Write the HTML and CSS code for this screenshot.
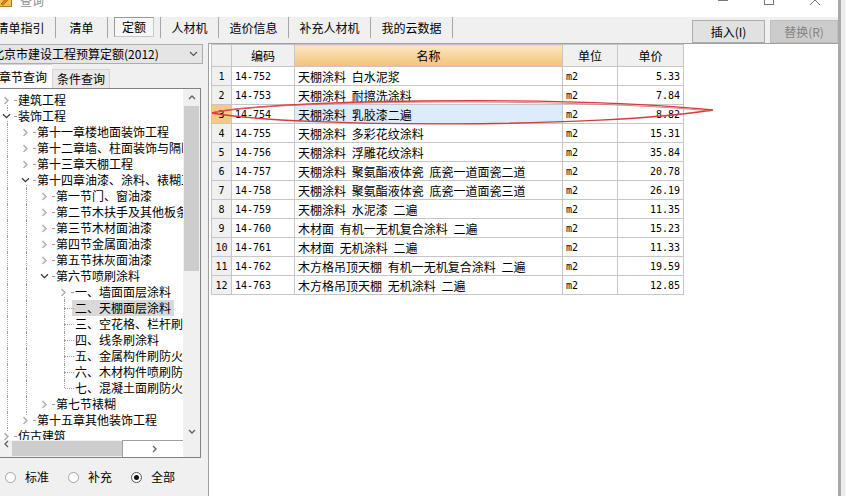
FILE: index.html
```html
<!DOCTYPE html>
<html lang="zh-CN">
<head>
<meta charset="utf-8">
<title>查询</title>
<link rel="stylesheet" href="styles.css">
</head>
<body>
<svg class="defs" width="0" height="0" aria-hidden="true">
  <symbol id="chev-r" viewBox="0 0 6 9"><polyline points="1.5,1 5,4.5 1.5,8" fill="none" stroke="#a8a8a8" stroke-width="1.3"/></symbol>
  <symbol id="chev-d" viewBox="0 0 9 6"><polyline points="1,1.2 4.5,4.7 8,1.2" fill="none" stroke="#3a3a3a" stroke-width="1.3"/></symbol>
</svg>
<div class="screen">
  <div class="window">
    <header class="titlebar">
      <svg class="app-icon" viewBox="0 0 14 14"><rect x="0.5" y="0.5" width="13" height="13" fill="#f3c24d" stroke="#b7791f"/><path d="M3 11 L10 3 L12 5 L5 12 Z" fill="#d9822b" stroke="#8a4b12" stroke-width="0.6"/></svg>
      <span class="title">查询</span>
      <div class="caption">
        <span class="cap"><svg viewBox="0 0 10 10" width="10" height="10"><line x1="0" y1="5.5" x2="10" y2="5.5" stroke="#777" stroke-width="1"/></svg></span>
        <span class="cap"><svg viewBox="0 0 10 10" width="10" height="10"><rect x="0.5" y="0.5" width="9" height="9" fill="none" stroke="#777" stroke-width="1"/></svg></span>
        <span class="cap"><svg viewBox="0 0 10 10" width="10" height="10"><path d="M0 0 L10 10 M10 0 L0 10" stroke="#777" stroke-width="1"/></svg></span>
      </div>
    </header>

    <div class="toolbar">
      <nav class="tabs">
        <span class="tab first">清单指引</span>
        <span class="tab narrow">清单</span>
        <span class="tab pressed"><span class="press-box">定额</span></span>
        <span class="tab">人材机</span>
        <span class="tab">造价信息</span>
        <span class="tab">补充人材机</span>
        <span class="tab">我的云数据</span>
      </nav>
      <div class="actions">
        <span class="btn">插入(I)</span>
        <span class="btn disabled">替换(R)</span>
      </div>
    </div>

    <div class="main">
      <aside class="left">
        <div class="combo">
          <span class="combo-text">北京市建设工程预算定额(2012)</span>
          <svg class="combo-arrow" viewBox="0 0 9 6" width="9" height="6"><polyline points="1,1 4.5,4.5 8,1" fill="none" stroke="#555" stroke-width="1.2"/></svg>
        </div>
        <div class="ptabs">
          <span class="ptab active">章节查询</span>
          <span class="ptab">条件查询</span>
        </div>
        <div class="treebox">
          <div class="tree">
            <div class="row"><span class="n c dn"><svg><use href="#chev-r"/></svg><b class="dot"></b></span><span class="t">建筑工程</span></div>
            <div class="row"><span class="n e up dn"><svg><use href="#chev-d"/></svg><b class="dot"></b></span><span class="t">装饰工程</span></div>
            <div class="row"><i class="g v"></i><span class="n c"><svg><use href="#chev-r"/></svg><b class="dot"></b></span><span class="t">第十一章楼地面装饰工程</span></div>
            <div class="row"><i class="g v"></i><span class="n c"><svg><use href="#chev-r"/></svg><b class="dot"></b></span><span class="t">第十二章墙、柱面装饰与隔断、幕墙工程</span></div>
            <div class="row"><i class="g v"></i><span class="n c"><svg><use href="#chev-r"/></svg><b class="dot"></b></span><span class="t">第十三章天棚工程</span></div>
            <div class="row"><i class="g v"></i><span class="n e dn"><svg><use href="#chev-d"/></svg><b class="dot"></b></span><span class="t">第十四章油漆、涂料、裱糊工程</span></div>
            <div class="row"><i class="g v"></i><i class="g v"></i><span class="n c"><svg><use href="#chev-r"/></svg><b class="dot"></b></span><span class="t">第一节门、窗油漆</span></div>
            <div class="row"><i class="g v"></i><i class="g v"></i><span class="n c"><svg><use href="#chev-r"/></svg><b class="dot"></b></span><span class="t">第二节木扶手及其他板条、线条油漆</span></div>
            <div class="row"><i class="g v"></i><i class="g v"></i><span class="n c"><svg><use href="#chev-r"/></svg><b class="dot"></b></span><span class="t">第三节木材面油漆</span></div>
            <div class="row"><i class="g v"></i><i class="g v"></i><span class="n c"><svg><use href="#chev-r"/></svg><b class="dot"></b></span><span class="t">第四节金属面油漆</span></div>
            <div class="row"><i class="g v"></i><i class="g v"></i><span class="n c"><svg><use href="#chev-r"/></svg><b class="dot"></b></span><span class="t">第五节抹灰面油漆</span></div>
            <div class="row"><i class="g v"></i><i class="g v"></i><span class="n e"><svg><use href="#chev-d"/></svg><b class="dot"></b></span><span class="t">第六节喷刷涂料</span></div>
            <div class="row"><i class="g v"></i><i class="g v"></i><i class="g"></i><span class="n c dn"><svg><use href="#chev-r"/></svg><b class="dot"></b></span><span class="t">一、墙面面层涂料</span></div>
            <div class="row"><i class="g v"></i><i class="g v"></i><i class="g"></i><span class="n leaf up dn"><b class="dash"></b></span><span class="t sel">二、天棚面层涂料</span></div>
            <div class="row"><i class="g v"></i><i class="g v"></i><i class="g"></i><span class="n leaf up dn"><b class="dash"></b></span><span class="t">三、空花格、栏杆刷涂料</span></div>
            <div class="row"><i class="g v"></i><i class="g v"></i><i class="g"></i><span class="n leaf up dn"><b class="dash"></b></span><span class="t">四、线条刷涂料</span></div>
            <div class="row"><i class="g v"></i><i class="g v"></i><i class="g"></i><span class="n leaf up dn"><b class="dash"></b></span><span class="t">五、金属构件刷防火涂料</span></div>
            <div class="row"><i class="g v"></i><i class="g v"></i><i class="g"></i><span class="n leaf up dn"><b class="dash"></b></span><span class="t">六、木材构件喷刷防火涂料</span></div>
            <div class="row"><i class="g v"></i><i class="g v"></i><i class="g"></i><span class="n leaf up"><b class="dash"></b></span><span class="t">七、混凝土面刷防火涂料</span></div>
            <div class="row"><i class="g v"></i><i class="g v"></i><span class="n c"><svg><use href="#chev-r"/></svg><b class="dot"></b></span><span class="t">第七节裱糊</span></div>
            <div class="row"><i class="g v"></i><span class="n c up"><svg><use href="#chev-r"/></svg><b class="dot"></b></span><span class="t">第十五章其他装饰工程</span></div>
            <div class="row"><span class="n c up"><svg><use href="#chev-r"/></svg><b class="dot"></b></span><span class="t">仿古建筑</span></div>
          </div>
          <div class="vscroll">
            <span class="arrow"><svg viewBox="0 0 8 5" width="8" height="5"><polyline points="1,4 4,1 7,4" fill="none" stroke="#606060" stroke-width="1.3"/></svg></span>
            <span class="track"><span class="vthumb"></span></span>
            <span class="arrow"><svg viewBox="0 0 8 5" width="8" height="5"><polyline points="1,1 4,4 7,1" fill="none" stroke="#606060" stroke-width="1.3"/></svg></span>
          </div>
          <div class="hscroll">
            <span class="harrow left"><svg viewBox="0 0 5 8" width="5" height="8"><polyline points="4,1 1,4 4,7" fill="none" stroke="#606060" stroke-width="1.3"/></svg></span>
            <span class="hthumb"></span>
            <span class="harrow right"><svg viewBox="0 0 5 8" width="5" height="8"><polyline points="1,1 4,4 1,7" fill="none" stroke="#606060" stroke-width="1.3"/></svg></span>
          </div>
          <div class="corner"></div>
        </div>
        <div class="radios">
          <span class="radio"><span class="circle"></span>标准</span>
          <span class="radio"><span class="circle"></span>补充</span>
          <span class="radio"><span class="circle on"></span>全部</span>
        </div>
      </aside>
      <div class="splitter"></div>
      <main class="right">
        <table class="grid">
          <colgroup><col class="c-rn"><col class="c-code"><col class="c-name"><col class="c-unit"><col class="c-price"></colgroup>
          <thead>
            <tr><th class="rn"></th><th>编码</th><th class="sorted">名称</th><th>单位</th><th>单价</th></tr>
          </thead>
          <tbody>
            <tr><td class="rn">1</td><td class="code">14-752</td><td>天棚涂料 白水泥浆</td><td class="code">m2</td><td class="num">5.33</td></tr>
            <tr><td class="rn">2</td><td class="code">14-753</td><td>天棚涂料 耐擦洗涂料</td><td class="code">m2</td><td class="num">7.84</td></tr>
            <tr class="current"><td class="rn">3</td><td class="code">14-754</td><td class="focus">天棚涂料 乳胶漆二遍</td><td class="code">m2</td><td class="num">8.82</td></tr>
            <tr><td class="rn">4</td><td class="code">14-755</td><td>天棚涂料 多彩花纹涂料</td><td class="code">m2</td><td class="num">15.31</td></tr>
            <tr><td class="rn">5</td><td class="code">14-756</td><td>天棚涂料 浮雕花纹涂料</td><td class="code">m2</td><td class="num">35.84</td></tr>
            <tr><td class="rn">6</td><td class="code">14-757</td><td>天棚涂料 聚氨酯液体瓷 底瓷一道面瓷二道</td><td class="code">m2</td><td class="num">20.78</td></tr>
            <tr><td class="rn">7</td><td class="code">14-758</td><td>天棚涂料 聚氨酯液体瓷 底瓷一道面瓷三道</td><td class="code">m2</td><td class="num">26.19</td></tr>
            <tr><td class="rn">8</td><td class="code">14-759</td><td>天棚涂料 水泥漆 二遍</td><td class="code">m2</td><td class="num">11.35</td></tr>
            <tr><td class="rn">9</td><td class="code">14-760</td><td>木材面 有机一无机复合涂料 二遍</td><td class="code">m2</td><td class="num">15.23</td></tr>
            <tr><td class="rn">10</td><td class="code">14-761</td><td>木材面 无机涂料 二遍</td><td class="code">m2</td><td class="num">11.33</td></tr>
            <tr><td class="rn">11</td><td class="code">14-762</td><td>木方格吊顶天棚 有机一无机复合涂料 二遍</td><td class="code">m2</td><td class="num">19.59</td></tr>
            <tr><td class="rn">12</td><td class="code">14-763</td><td>木方格吊顶天棚 无机涂料 二遍</td><td class="code">m2</td><td class="num">12.85</td></tr>
          </tbody>
        </table>
        <svg class="mark" viewBox="209 44 629 452" width="629" height="452" aria-hidden="true">
          <path d="M212,113 C262,100 560,95 713,110 C600,128 300,128 212,113" fill="none" stroke="#d8393c" stroke-width="1.4"/>
          <path d="M214,112 C270,101 565,97 711,111" fill="none" stroke="#e0676a" stroke-width="0.8"/>
        </svg>
      </main>
    </div>
  </div>
  <div class="backdrop"></div>
</div>
</body>
</html>
```
FILE: styles.css
```css
* { box-sizing: border-box; margin: 0; padding: 0; }
html, body { width: 846px; height: 496px; overflow: hidden; }
body {
  font: 12px/16px "Noto Sans CJK SC", "Liberation Sans", sans-serif;
  color: #000;
  background: #f0f0f0;
}
.defs { position: absolute; width: 0; height: 0; }

.screen { display: flex; height: 496px; }
.window { width: 838px; display: flex; flex-direction: column; background: #f0f0f0; }
.backdrop { flex: 1; border-left: 3px solid #a9a9a9; background: #ededed; }

/* title bar */
.titlebar { height: 17px; background: #fff; display: flex; align-items: flex-start; overflow: hidden; }
.app-icon { width: 14px; height: 14px; margin: -7px 0 0 -2px; flex: none; }
.title { margin: -7px 0 0 8px; color: #8f8f8f; }
.caption { margin-left: auto; display: flex; margin-top: -10px; }
.cap { width: 46px; height: 20px; display: flex; align-items: center; justify-content: center; }

/* toolbar */
.toolbar { height: 26px; display: flex; align-items: flex-start; }
.tabs { display: flex; height: 21px; }
.tab {
  height: 21px; padding: 0 10.5px; display: flex; align-items: center; justify-content: center;
  border-right: 1px solid #a5a5a5; white-space: nowrap;
}
.tab.first { margin-left: -14px; width: 70px; }
.tab.narrow { width: 52px; }
.tab.pressed { padding: 0 6px; width: 53px; align-items: flex-start; }
.press-box {
  width: 40px; height: 20px; display: flex; align-items: center; justify-content: center;
  border: 1px solid; border-color: #9a9a9a #c8c8c8 #c8c8c8 #9a9a9a; background: #f7f7f7;
}
.actions { margin-left: auto; margin-top: 3px; display: flex; gap: 5px; }
.btn {
  height: 23px; width: 73px; display: flex; align-items: center; justify-content: center;
  background: #e1e1e1; border: 1px solid #adadad;
}
.btn.disabled { width: 68px; background: #cccccc; border-color: #bfbfbf; color: #838383; }

/* main area */
.main { flex: 1; display: flex; min-height: 0; }
.left { width: 203px; display: flex; flex-direction: column; flex: none; }
.splitter { width: 5px; flex: none; background: #f0f0f0; }

.combo {
  margin: 1px 0 0 -12px; width: 215px; height: 20px; flex: none;
  display: flex; align-items: center; padding-left: 3px;
  background: #e5e5e5; border: 1px solid #adadad; white-space: nowrap;
}
.combo-arrow { margin: 0 4px 0 auto; flex: none; }

.ptabs { height: 24px; display: flex; align-items: flex-end; flex: none; }
.ptab {
  height: 19px; padding: 0 4px; display: flex; align-items: center;
  background: #e9e9e9; border: 1px solid #d5d5d5; border-bottom: none; white-space: nowrap;
}
.ptab.active { height: 24px; margin-left: -7px; padding-left: 5px; width: 59px; background: #fbfbfb; border-right: none; }

.treebox {
  margin-left: -1px; width: 202px; height: 370px; flex: none;
  border: 1px solid #828282; background: #fff;
  display: grid; grid-template-columns: 183px 17px; grid-template-rows: 351px 17px;
}
.tree { overflow: hidden; padding-top: 3px; white-space: nowrap; }
.row { display: flex; height: 16px; align-items: center; }
.g { width: 19px; height: 16px; position: relative; flex: none; }
.g.v::before {
  content: ""; position: absolute; left: 7px; top: 0; bottom: 0; border-left: 1px dotted #9c9c9c;
}
.n { width: 18px; height: 16px; position: relative; flex: none; display: flex; align-items: center; }
.n.c svg { width: 6px; height: 9px; margin-left: 3px; }
.n.e svg { width: 9px; height: 6px; margin-left: 2px; }
.n.up::before {
  content: ""; position: absolute; left: 7px; top: 0; height: 3px; border-left: 1px dotted #9c9c9c;
}
.n.dn::after {
  content: ""; position: absolute; left: 7px; top: 13px; bottom: 0; border-left: 1px dotted #9c9c9c;
}
.n.leaf.up::before { height: 8px; }
.n.leaf.dn::after { top: 8px; }
.dot { position: absolute; left: 14px; top: 8px; width: 2px; border-top: 1px dotted #9c9c9c; }
.dash { position: absolute; left: 8px; top: 8px; width: 9px; border-top: 1px dotted #9c9c9c; }
.t { line-height: 16px; }
.t.sel { background: #d9d9d9; margin-left: -3px; padding: 0 3px; }

.vscroll { display: flex; flex-direction: column; background: #f0f0f0; }
.arrow { height: 17px; display: flex; align-items: center; justify-content: center; flex: none; }
.track { flex: 1; display: flex; flex-direction: column; padding: 0 1px; }
.vthumb { height: 165px; background: #cdcdcd; }
.hscroll { display: flex; align-items: center; background: #f0f0f0; }
.harrow { height: 17px; display: flex; align-items: center; flex: none; }
.harrow.left { width: 12px; padding-left: 1px; }
.harrow.right { width: 17px; margin-left: auto; justify-content: center; }
.hthumb { width: 110px; height: 15px; background: #cdcdcd; }
.corner { background: #f0f0f0; }

.radios { flex: 1; display: flex; align-items: center; padding-left: 5px; gap: 19px; }
.radio { display: flex; align-items: center; gap: 9px; }
.circle {
  width: 11px; height: 11px; border-radius: 50%; border: 1px solid #a3a3a3; background: #fff;
  display: flex; align-items: center; justify-content: center;
}
.circle.on { border-color: #555; }
.circle.on::after { content: ""; width: 5px; height: 5px; border-radius: 50%; background: #111; }

/* right grid */
.right {
  flex: 1; position: relative; background: #fff;
  border-left: 1px solid #a0a0a0; border-top: 1px solid #a0a0a0; padding-left: 2px;
}
.grid { border-collapse: collapse; table-layout: fixed; width: 472px; }
.c-rn { width: 20px; }
.c-code { width: 63px; }
.c-name { width: 268px; }
.c-unit { width: 55px; }
.c-price { width: 66px; }
.grid th, .grid td { border: 1px solid #c6c6c6; white-space: nowrap; overflow: hidden; }
.grid thead tr { height: 22px; }
.grid th { font-weight: normal; background: #f0f0f0; text-align: center; }
.grid th.sorted { background: linear-gradient(#fce8c2, #f3c178); }
.grid tbody tr { height: 19px; }
.grid td { padding: 0 3px; line-height: 17px; word-spacing: 3px; }
.grid td.rn {
  background: #f0f0f0; text-align: center; padding: 0;
  font-family: "DejaVu Sans Mono", "Liberation Mono", monospace; font-size: 10px;
}
.grid td.code { font-family: "DejaVu Sans Mono", "Liberation Mono", monospace; font-size: 10px; }
.grid td.num {
  text-align: right; font-family: "DejaVu Sans Mono", "Liberation Mono", monospace; font-size: 10px;
}
.grid tr.current td.rn { background: #f8c887; }
.grid td.focus { background: #dcecfc; }

.mark { position: absolute; left: 0; top: 0; pointer-events: none; }
```
